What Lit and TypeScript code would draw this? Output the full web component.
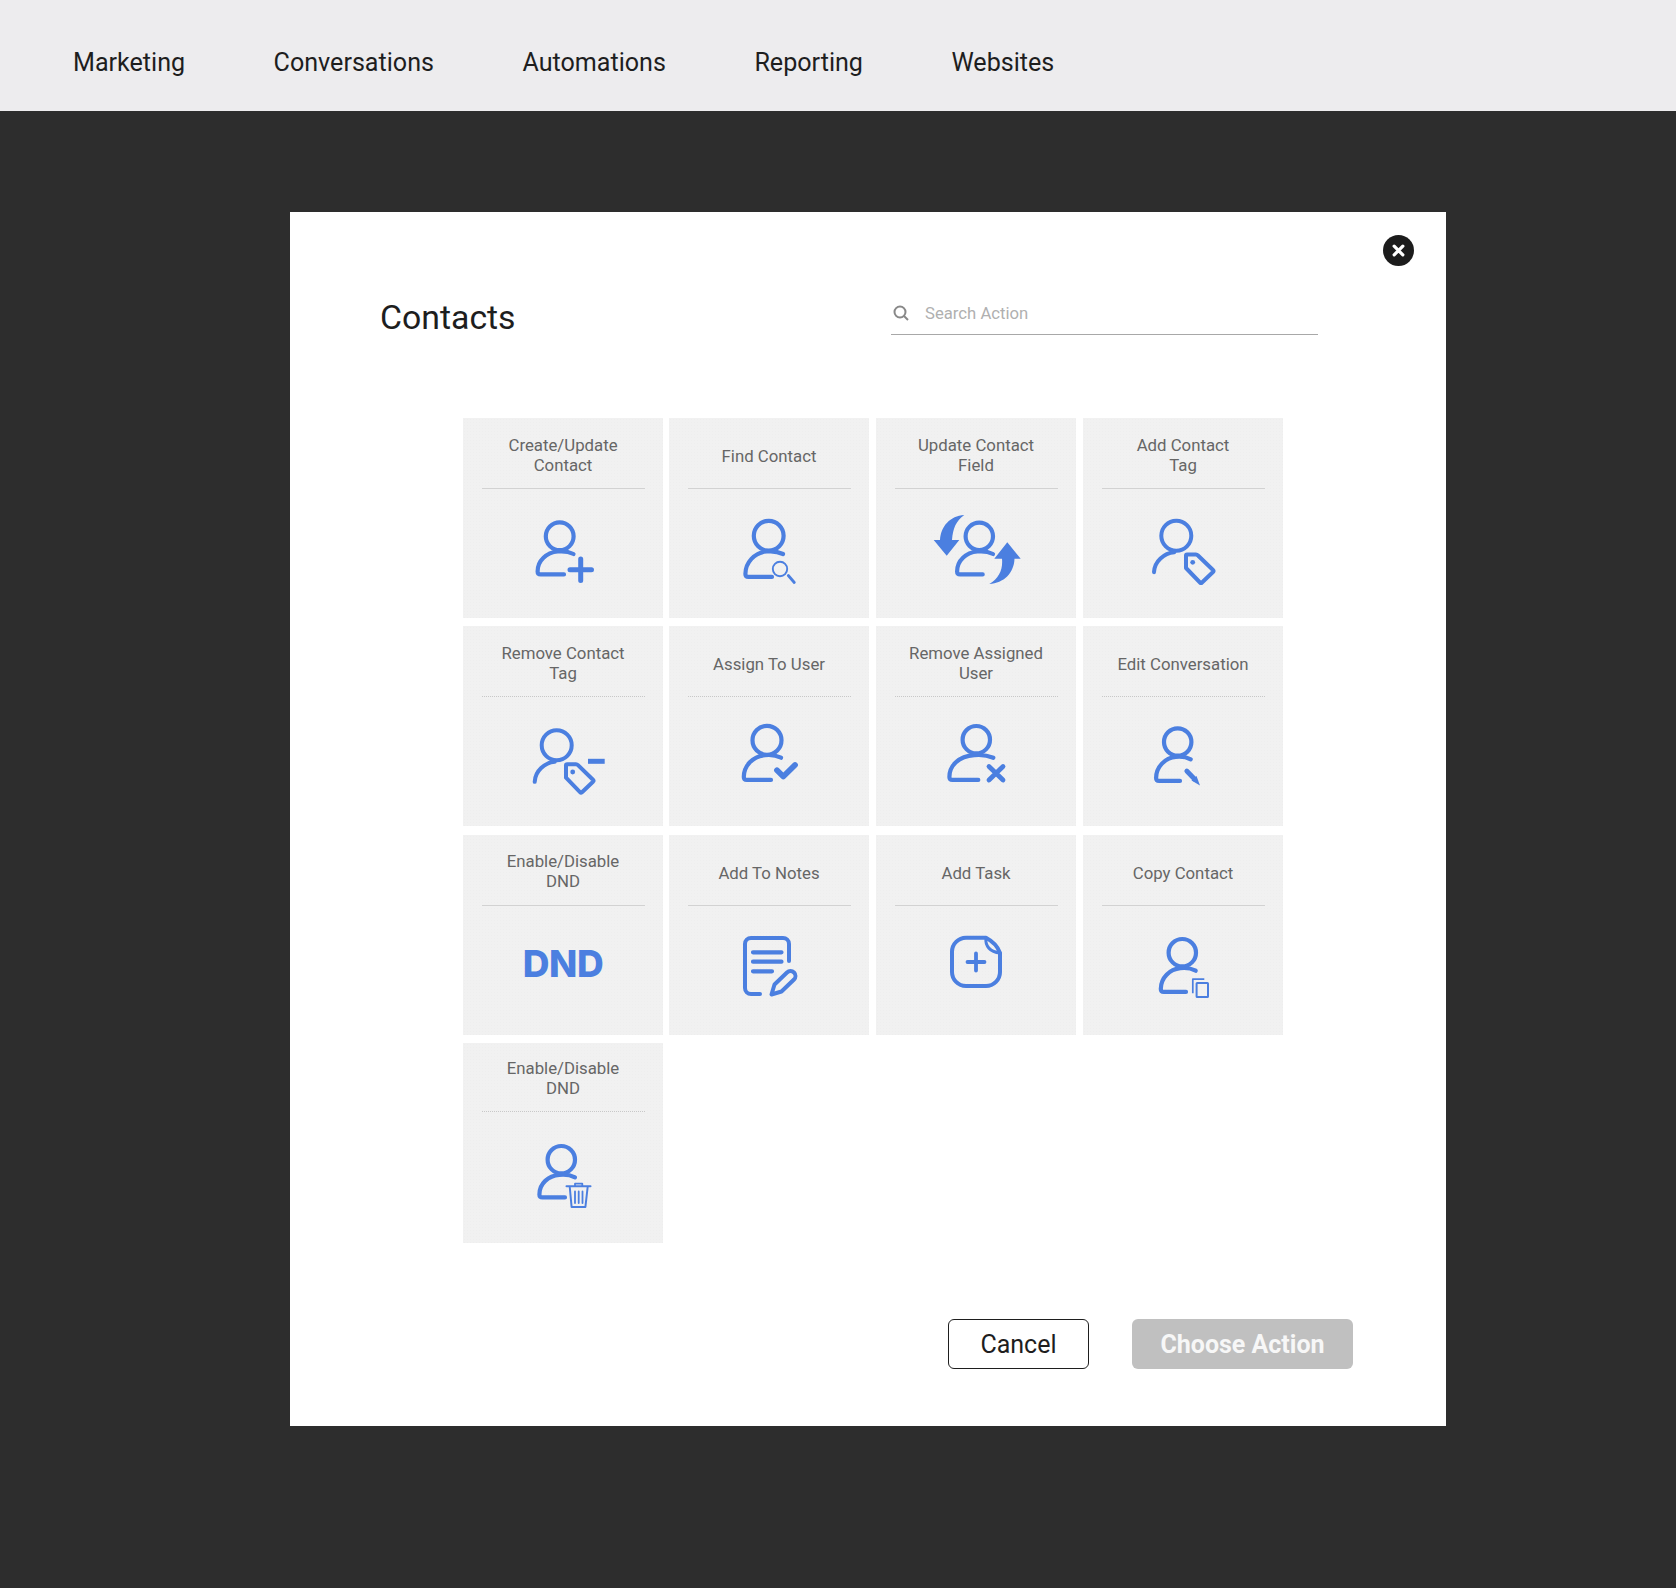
import { LitElement, html, svg, css, type TemplateResult } from "lit";
import { customElement } from "lit/decorators.js";

const NAV = ["Marketing", "Conversations", "Automations", "Reporting", "Websites"];

// Bust shared by most of the contact icons. Values are outer edges, in card pixels.
type Bust = { hx: number; hy: number; r: number; left: number; bottom: number; end: number; sx: number; sy: number };

function person(p: Bust, sw = 4.2) {
  const l = p.left + sw / 2;
  const b = p.bottom - sw / 2;
  return svg`
    <circle stroke-width=${sw} cx=${p.hx} cy=${p.hy} r=${p.r - sw / 2} />
    <path stroke-width=${sw} d="M${p.sx} ${p.sy} Q${p.hx + (p.sx - p.hx) * 0.5} ${p.sy - 3.5} ${p.hx - 2} ${p.sy - 2.5} C${l + 9} ${p.sy - 1.5} ${l} ${b - 14} ${l} ${b - 3} Q${l} ${b} ${l + 3} ${b} L${p.end} ${b}" />
  `;
}

function tagged(hx: number, hy: number, left: number, dy: number) {
  return svg`
    <circle cx=${hx} cy=${hy} r="15" />
    <path d="M${left} ${hy + 36.5} C${left + 0.5} ${hy + 25.5} ${left + 10} ${hy + 17.5} ${hx - 2} ${hy + 16.5}" />
    <path d="M103 ${137.5 + dy} Q103 ${136.5 + dy} 104 ${136.5 + dy} L113 ${136.5 + dy} Q114 ${136.5 + dy} 115 ${137.5 + dy} L130 ${152 + dy} Q131 ${153 + dy} 130 ${154 + dy} L119 ${164.5 + dy} Q118 ${165.5 + dy} 117 ${164.5 + dy} L103 ${150 + dy} Z" />
    <circle class="solid" cx="109.7" cy=${144.3 + dy} r="2.4" />
  `;
}

const ICONS: Record<string, () => unknown> = {
  add: () => svg`
    ${person({ hx: 96.7, hy: 118.3, r: 16, left: 72.5, bottom: 158.5, end: 101, sx: 110.5, sy: 136 })}
    <path class="thick" d="M107 151.7H128.5M117.7 141V162.5" />
  `,
  find: () => svg`
    ${person({ hx: 99.7, hy: 117.7, r: 17, left: 74.3, bottom: 161, end: 103, sx: 114, sy: 136 })}
    <circle cx="111" cy="151" r="7.2" stroke-width="1.9" />
    <path stroke-width="2.8" d="M119.3 157.5L125.3 164.5" />
  `,
  update: () => svg`
    ${person({ hx: 103.3, hy: 118.3, r: 15.8, left: 79, bottom: 158.5, end: 106.7, sx: 117, sy: 136 })}
    <path class="solid" d="M88.3 97C74 98 65 108 64 122L57.7 122L70.7 137.7L83.3 122L76 122C77 110 80 103 88.3 97Z" />
    <path class="solid" d="M113.3 166C128 165 138 155 138.5 140.7L144.7 140.7L131.3 124.3L118.3 140.7L126 140.7C127 152 123 160 113.3 166Z" />
  `,
  tag: () => tagged(93.3, 117.7, 71, 0),
  untag: () => svg`
    ${tagged(93.7, 119.3, 71.7, 1.7)}
    <path stroke-width="5" stroke-linecap="butt" d="M125 135.3H141.7" />
  `,
  assign: () => svg`
    ${person({ hx: 98, hy: 114.3, r: 16.6, left: 72.7, bottom: 156, end: 102, sx: 112, sy: 131.7 })}
    <path stroke-width="5.8" d="M108 144.3L114.3 150.5L126 139" />
  `,
  unassign: () => svg`
    ${person({ hx: 100.3, hy: 113.7, r: 15.8, left: 71.3, bottom: 156, end: 102.3, sx: 117.3, sy: 131.7 })}
    <path stroke-width="4.8" d="M113 140.5L127 154M127 140.5L113 154" />
  `,
  edit: () => svg`
    ${person({ hx: 94.7, hy: 116, r: 15.8, left: 71, bottom: 157, end: 97, sx: 107.7, sy: 133.3 })}
    <path stroke-width="4.8" d="M103.8 145L111.5 153" />
    <path class="solid" d="M108.5 154.5L113.5 150L117 159.5Z" />
  `,
  notes: () => svg`
    <path stroke-width="4" d="M120 126V109a6 6 0 0 0-6-6H82a6 6 0 0 0-6 6V153a6 6 0 0 0 6 6H91" />
    <path stroke-width="4.2" d="M84 117.3H112.5M84 126.7H112.5M84 136.3H103" />
    <path stroke-width="4" d="M102.5 159.5L105.5 149.5L118 137.5a4.5 4.5 0 0 1 7 7L112.5 156.5Z" />
  `,
  task: () => svg`
    <path stroke-width="4" d="M110 102.8H90a14 14 0 0 0-14 14V137a14 14 0 0 0 14 14H110a14 14 0 0 0 14-14V118C122 112 116 106 110 102.8Z" />
    <path d="M110 103C109 111 114 117 124 118" stroke-width="3" />
    <path stroke-width="3.8" d="M91.5 127H108.5M100 118.5V135.5" />
  `,
  copy: () => svg`
    ${person({ hx: 99.3, hy: 117.7, r: 15.8, left: 75.7, bottom: 159, end: 103, sx: 112.7, sy: 135.7 })}
    <rect x="113.6" y="148" width="11.4" height="14" rx="0.6" stroke-width="2" />
    <path stroke-width="1.7" stroke-linecap="butt" d="M121.3 144.2H109.8V158.3" />
  `,
  trash: () => svg`
    ${person({ hx: 98.3, hy: 116.7, r: 15.8, left: 74.3, bottom: 156.5, end: 102, sx: 112, sy: 134.3 })}
    <path stroke-width="2" d="M103.5 143.3H127.5" />
    <path stroke-width="1.8" d="M112 143V140.7H119.3V143" />
    <path stroke-width="2" d="M106.8 144.5L108.6 164H122.4L124.6 144.5" />
    <path stroke-width="1.8" d="M112 148.5V160M115.7 148.5V160M119.5 148.5V160" />
  `,
};

type Action = { title: string[]; icon: string; faint?: boolean; compact?: boolean };

const ACTIONS: Action[] = [
  { title: ["Create/Update", "Contact"], icon: "add" },
  { title: ["Find Contact"], icon: "find" },
  { title: ["Update Contact", "Field"], icon: "update" },
  { title: ["Add Contact", "Tag"], icon: "tag" },
  { title: ["Remove Contact", "Tag"], icon: "untag", faint: true },
  { title: ["Assign To User"], icon: "assign", faint: true },
  { title: ["Remove Assigned", "User"], icon: "unassign", faint: true },
  { title: ["Edit Conversation"], icon: "edit", faint: true },
  { title: ["Enable/Disable", "DND"], icon: "dnd" },
  { title: ["Add To Notes"], icon: "notes" },
  { title: ["Add Task"], icon: "task" },
  { title: ["Copy Contact"], icon: "copy" },
  { title: ["Enable/Disable", "DND"], icon: "trash", faint: true, compact: true },
];

@customElement("app-root")
export class AppRoot extends LitElement {
  static styles = css`
    :host {
      display: block;
      min-height: 1588px;
      background: #2d2d2d;
      font-family: Roboto, "Liberation Sans", sans-serif;
    }

    .topbar {
      display: flex;
      align-items: center;
      gap: 88.5px;
      box-sizing: border-box;
      height: 111px;
      padding: 14px 0 0 73px;
      background: #edecee;
      color: #1e1e1e;
      font-size: 25.1px;
    }

    .modal {
      position: relative;
      box-sizing: border-box;
      width: 1156px;
      height: 1214px;
      margin: 101px 0 0 290px;
      padding-top: 78px;
      background: #fff;
    }

    .close {
      position: absolute;
      top: 23px;
      right: 32px;
      display: flex;
      align-items: center;
      justify-content: center;
      width: 31px;
      height: 31px;
      border-radius: 50%;
      background: #1c1c1c;
    }

    .close svg {
      width: 13px;
      height: 13px;
      stroke: #fff;
      stroke-width: 3;
      stroke-linecap: round;
      fill: none;
    }

    .head {
      display: flex;
      justify-content: space-between;
      align-items: flex-start;
      height: 46px;
      padding: 0 128px 0 90px;
    }

    h1 {
      margin: 0;
      color: #1e1e1e;
      font-size: 33.8px;
      font-weight: 400;
      line-height: 56px;
    }

    .search {
      display: flex;
      align-items: center;
      gap: 16px;
      box-sizing: border-box;
      width: 427px;
      height: 45px;
      padding: 2px 0 0 2px;
      border-bottom: 1.5px solid #a8a8a8;
      color: #b0b0b0;
      font-size: 16.7px;
    }

    .search svg {
      width: 16px;
      height: 16px;
      stroke: #888;
      stroke-width: 2;
      fill: none;
    }

    .grid {
      display: grid;
      grid-template-columns: 206px 207px 207px 200px;
      grid-auto-rows: 200px;
      row-gap: 8.33px;
      margin: 82px 0 0 173px;
    }

    .card {
      display: flex;
      flex-direction: column;
      width: 200px;
      background-color: #f1f1f1;
      background-image: radial-gradient(#eeeeee 0.6px, transparent 0.7px);
      background-size: 3px 3px;
    }

    .title {
      display: flex;
      flex-direction: column;
      align-items: center;
      justify-content: center;
      box-sizing: border-box;
      height: 70px;
      padding-top: 3px;
      color: #666;
      font-size: 16.8px;
      line-height: 20px;
    }

    .title.single {
      padding-top: 6px;
    }

    .card.compact .title {
      height: 68px;
    }

    .rule {
      flex: none;
      height: 0;
      margin: 0 18.5px;
      border-top: 1px solid #d2d2d2;
    }

    .card.faint .rule {
      border-top: 1px dotted #c8c8c8;
    }

    .art {
      display: block;
      width: 200px;
      height: 129px;
      fill: none;
      stroke: #4b7fe0;
      stroke-width: 4;
      stroke-linecap: round;
      stroke-linejoin: round;
    }

    .card.compact .art {
      height: 131px;
    }

    .art .solid {
      fill: #4b7fe0;
      stroke: none;
    }

    .art .thick {
      stroke-width: 5;
    }

    .dnd {
      display: flex;
      align-items: center;
      justify-content: center;
      height: 116px;
      color: #4b7fe0;
      font-family: Inter, Roboto, sans-serif;
      font-size: 37px;
      font-weight: 800;
      letter-spacing: -0.5px;
    }

    .footer {
      display: flex;
      justify-content: flex-end;
      gap: 43px;
      margin-top: 76px;
      padding-right: 93px;
    }

    .btn {
      display: flex;
      align-items: center;
      justify-content: center;
      box-sizing: border-box;
      height: 50px;
      padding-top: 2px;
      border-radius: 6px;
      font-size: 25px;
    }

    .btn.cancel {
      width: 141px;
      border: 1px solid #1e1e1e;
      color: #1e1e1e;
    }

    .btn.choose {
      width: 221px;
      background: #c0c0c0;
      color: #f7f7f7;
      font-weight: 700;
    }
  `;

  private renderCard(action: Action): TemplateResult {
    const top = action.compact ? 69 : 71;
    return html`
      <div class="card ${action.faint ? "faint" : ""} ${action.compact ? "compact" : ""}">
        <div class="title ${action.title.length === 1 ? "single" : ""}">
          ${action.title.map((line) => html`<span>${line}</span>`)}
        </div>
        <div class="rule"></div>
        ${action.icon === "dnd"
          ? html`<div class="dnd">DND</div>`
          : html`<svg class="art" viewBox="0 ${top} 200 ${200 - top}">${ICONS[action.icon]()}</svg>`}
      </div>
    `;
  }

  render(): TemplateResult {
    return html`
      <nav class="topbar">${NAV.map((item) => html`<span>${item}</span>`)}</nav>
      <section class="modal">
        <div class="close">
          <svg viewBox="0 0 12 12"><path d="M2 2L10 10M10 2L2 10" /></svg>
        </div>
        <div class="head">
          <h1>Contacts</h1>
          <div class="search">
            <svg viewBox="0 0 16 16"><circle cx="7" cy="7" r="5.5" /><path d="M11 11L15 15" /></svg>
            <span>Search Action</span>
          </div>
        </div>
        <div class="grid">${ACTIONS.map((action) => this.renderCard(action))}</div>
        <div class="footer">
          <div class="btn cancel">Cancel</div>
          <div class="btn choose">Choose Action</div>
        </div>
      </section>
    `;
  }
}
